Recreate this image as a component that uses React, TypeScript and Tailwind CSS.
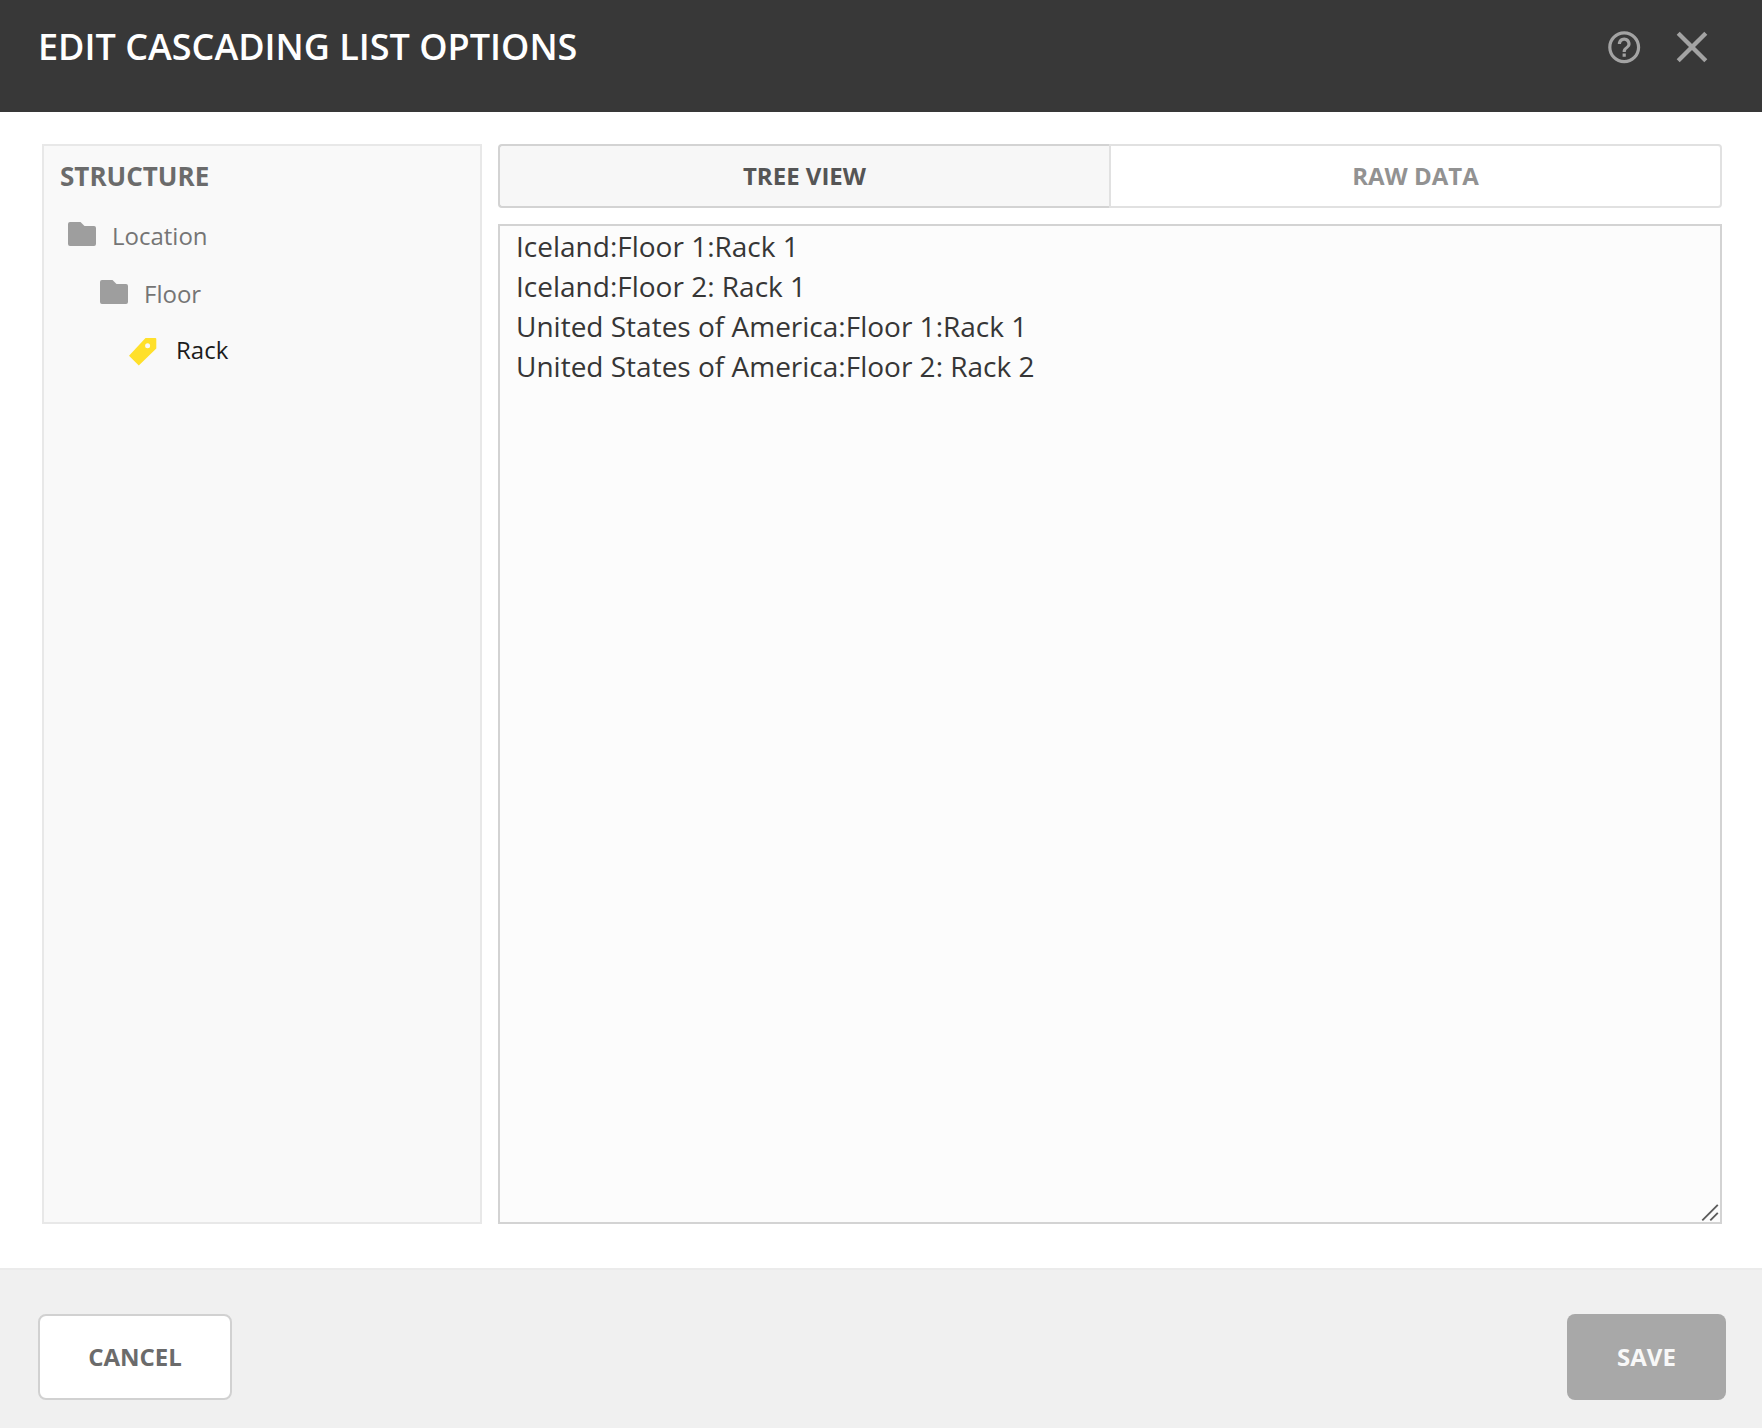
import React from "react";

function HelpIcon() {
  return (
    <svg className="size-[38.4px]" viewBox="0 0 24 24" fill="#a3a3a3">
      <path d="M11 18h2v-2h-2v2zm1-16C6.48 2 2 6.48 2 12s4.48 10 10 10 10-4.48 10-10S17.52 2 12 2zm0 18c-4.41 0-8-3.59-8-8s3.59-8 8-8 8 3.59 8 8-3.59 8-8 8zm0-14c-2.21 0-4 1.79-4 4h2c0-1.1.9-2 2-2s2 .9 2 2c0 2-3 1.75-3 5h2c0-2.250 3-2.500 3-5 0-2.210-1.790-4-4-4z" />
    </svg>
  );
}

function CloseIcon() {
  return (
    <svg className="size-8" viewBox="0 0 32 32" stroke="#a3a3a3" strokeWidth="4.3">
      <path d="M2.200 2.200 29.800 29.800M29.800 2.200 2.200 29.800" />
    </svg>
  );
}

function FolderIcon() {
  return (
    <svg className="h-6 w-7" viewBox="0 0 28 24" fill="#9e9e9e">
      <path d="M2 0h10.500l4 4H26a2 2 0 0 1 2 2v16a2 2 0 0 1-2 2H2a2 2 0 0 1-2-2V2a2 2 0 0 1 2-2z" />
    </svg>
  );
}

function TagIcon() {
  return (
    <svg className="mt-0.5 size-7" viewBox="0 0 28 28" fill="#ffe02b">
      <path
        fillRule="evenodd"
        d="M16.500 0H26.300q1 0 1 1V10.500L9.800 27.500 0 17.800zM18.600 5.200a2.500 2.500 0 1 0 0 5 2.500 2.500 0 0 0 0-5z"
      />
    </svg>
  );
}

export default function App() {
  return (
    <div className="flex h-[1428px] w-[1762px] flex-col overflow-hidden bg-white font-['Open_Sans',sans-serif]">
      <header className="flex h-28 items-start justify-between bg-[#383838] pl-[38px] pr-[54px]">
        <h1 className="mt-5 text-[36px] font-semibold leading-[54px] text-white">
          EDIT CASCADING LIST OPTIONS
        </h1>
        <div className="mt-[19px] flex h-14 items-center gap-[33px]">
          <HelpIcon />
          <CloseIcon />
        </div>
      </header>

      <main className="flex h-[1156px] gap-4 pb-11 pl-[42px] pr-10 pt-8">
        <aside className="w-[440px] shrink-0 border-2 border-[#e8e8e8] bg-[#f9f9f9]">
          <h2 className="mt-[10px] pl-4 text-[26px] font-bold leading-10 text-[#6b6b6b]">STRUCTURE</h2>
          <ul className="text-2xl text-[#757575]">
            <li className="mt-3 flex h-[52px] items-start gap-4 pl-6 pt-[14px] leading-7">
              <FolderIcon />
              <span>Location</span>
            </li>
            <li className="mt-1.5 flex h-[52px] items-start gap-4 pl-14 pt-[14px] leading-7">
              <FolderIcon />
              <span>Floor</span>
            </li>
            <li className="mt-1 flex h-[52px] items-start gap-[19px] pl-[85px] pt-[14px] leading-7 text-[#1c1c1c]">
              <TagIcon />
              <span>Rack</span>
            </li>
          </ul>
        </aside>

        <section className="flex flex-1 flex-col gap-4">
          <div className="flex h-16 text-2xl font-bold">
            <button className="w-[611px] rounded-l border-2 border-r-0 border-[#d3d3d3] bg-[#f7f7f7] text-[#555]">
              TREE VIEW
            </button>
            <button className="flex-1 rounded-r border-2 border-[#e1e1e1] text-[#929292]">RAW DATA</button>
          </div>
          <div className="relative flex-1 whitespace-pre border-2 border-[#d3d3d3] bg-[#fcfcfc] px-4 text-[28px] leading-10 text-[#363636]">
            <p>Iceland:Floor 1:Rack 1</p>
            <p>Iceland:Floor 2: Rack 1</p>
            <p>United States of America:Floor 1:Rack 1</p>
            <p>United States of America:Floor 2: Rack 2</p>
            <svg
              className="absolute bottom-0 right-0 size-5"
              viewBox="0 0 20 20"
              stroke="#5c5c5c"
              strokeWidth="1.9"
            >
              <path d="M2.300 18.300 17.800 2.800M10.300 18.300 17.800 10.800" />
            </svg>
          </div>
        </section>
      </main>

      <footer className="flex flex-1 items-start justify-between border-t-2 border-[#ebebeb] bg-[#f0f0f0] pl-[38px] pr-9 pt-11 text-2xl font-bold">
        <button className="h-[86px] w-[194px] rounded-lg border-2 border-[#d1d1d1] bg-white text-[#6b6b6b]">
          CANCEL
        </button>
        <button className="h-[86px] w-[159px] rounded-lg bg-[#a8a8a8] text-[#f8f8f8]">SAVE</button>
      </footer>
    </div>
  );
}
